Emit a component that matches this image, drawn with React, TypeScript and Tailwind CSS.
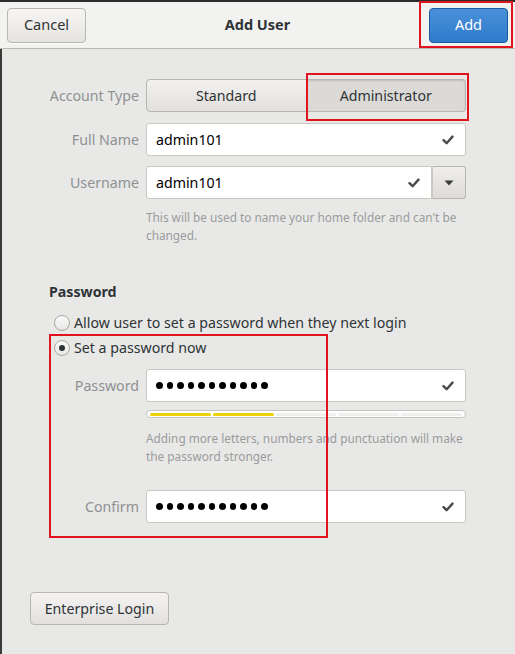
import React from "react";

const font = "font-['Noto_Sans','Open_Sans',sans-serif]";

const Check = () => (
  <svg width="12" height="10" viewBox="0 0 12 10" className="shrink-0">
    <path d="M1.5 5.2 L4.6 8.2 L10.5 1.6" fill="none" stroke="#4a4a4a" strokeWidth="2.4" strokeLinecap="round" strokeLinejoin="round" />
  </svg>
);

const Dots = () => (
  <div className="flex gap-[4px] items-center">
    {Array.from({ length: 11 }).map((_, i) => (
      <span key={i} className="block w-[6.5px] h-[6.5px] rounded-full bg-black" />
    ))}
  </div>
);

const Label = ({ children }: { children: React.ReactNode }) => (
  <span className="w-[90px] text-right mr-[7px] text-[14.2px] text-[#8e9192] shrink-0 whitespace-nowrap">{children}</span>
);

const Field = ({ children }: { children: React.ReactNode }) => (
  <div className="flex items-center justify-between h-[33px] w-[320px] bg-white border border-[#cdc7c2] rounded-[3px] pl-[9px] pr-[11px]">
    {children}
  </div>
);

export default function App() {
  return (
    <div className={`${font} relative w-[515px] h-[654px] bg-[#e8e8e7] overflow-hidden flex flex-col text-[#2e3436]`}>
      <div className="h-[2px] bg-[#2b2b2b] shrink-0" />
      <header className="h-[47px] shrink-0 flex items-center justify-between pl-[7px] pr-[7px] bg-[#f2f2f1] border-b border-[#b9b9b6]">
        <button className="h-[35px] w-[79px] rounded-[4px] border border-[#b8b6b1] bg-gradient-to-b from-[#f6f5f4] to-[#e6e4e1] text-[14.5px] text-[#2e3436] shadow-[0_1px_0_rgba(255,255,255,0.8)]">
          Cancel
        </button>
        <span className="text-[14.5px] font-bold text-[#2e3436]">Add User</span>
        <button className="h-[35px] w-[79px] rounded-[4px] border border-[#1b5c9e] bg-gradient-to-b from-[#4a90d9] to-[#2f7bcb] text-[14.5px] text-white">
          Add
        </button>
      </header>

      <div className="flex-1 border-l-2 border-[#3a3a3a] pl-[47px] pt-[30px] flex flex-col">
        <div className="flex items-center">
          <Label>Account Type</Label>
          <div className="flex h-[33px] w-[320px]">
            <button className="flex-1 rounded-l-[4px] border border-[#b8b6b1] bg-gradient-to-b from-[#f2f1f0] to-[#e2e0dd] text-[14.2px] text-[#2e3436]">
              Standard
            </button>
            <button className="flex-1 rounded-r-[4px] border border-l-0 border-[#b8b6b1] bg-[#dcdad6] text-[14.2px] text-[#2e3436] shadow-[inset_0_1px_2px_rgba(0,0,0,0.12)]">
              Administrator
            </button>
          </div>
        </div>

        <div className="flex items-center mt-[11px]">
          <Label>Full Name</Label>
          <Field>
            <span className="text-[14.2px] text-black">admin101</span>
            <Check />
          </Field>
        </div>

        <div className="flex items-center mt-[10px]">
          <Label>Username</Label>
          <div className="flex h-[33px] w-[320px]">
            <div className="flex-1 flex items-center justify-between bg-white border border-[#cdc7c2] rounded-l-[3px] pl-[9px] pr-[11px]">
              <span className="text-[14.2px] text-black">admin101</span>
              <Check />
            </div>
            <div className="w-[34px] flex items-center justify-center border border-l-[#cdc7c2] border-[#b8b6b1] rounded-r-[3px] bg-gradient-to-b from-[#efeeec] to-[#dddbd8]">
              <svg width="10" height="6" viewBox="0 0 10 6">
                <path d="M0.5 0.5 L9.5 0.5 L5 5.5 Z" fill="#3d3d3d" />
              </svg>
            </div>
          </div>
        </div>

        <p className="ml-[97px] mt-[9px] w-[320px] text-[11.8px] leading-[18px] text-[#9a9c9c]">
          This will be used to name your home folder and can't be changed.
        </p>

        <h2 className="mt-[38px] text-[14.2px] font-bold text-[#2e3436] leading-[20px]">Password</h2>

        <label className="flex items-center mt-[11px] ml-[5px] h-[20px]">
          <span className="shrink-0 w-[16px] h-[16px] rounded-full border border-[#a9a7a3] bg-gradient-to-b from-[#fafafa] to-[#e8e7e5] mr-[4px]" />
          <span className="text-[14.2px] whitespace-nowrap">Allow user to set a password when they next login</span>
        </label>
        <label className="flex items-center mt-[5px] ml-[5px] h-[20px]">
          <span className="shrink-0 w-[16px] h-[16px] rounded-full border border-[#a9a7a3] bg-gradient-to-b from-[#fafafa] to-[#e8e7e5] mr-[4px] flex items-center justify-center">
            <span className="w-[6px] h-[6px] rounded-full bg-[#2e3436]" />
          </span>
          <span className="text-[14.2px]">Set a password now</span>
        </label>

        <div className="flex items-center mt-[11px]">
          <Label>Password</Label>
          <Field>
            <Dots />
            <Check />
          </Field>
        </div>

        <div className="ml-[97px] mt-[8px] w-[320px] h-[8px] rounded-full border border-[#c6c4c0] bg-white flex gap-[2px] px-[3px] items-center">
          <span className="flex-1 h-[3px] rounded-full bg-[#edd400]" />
          <span className="flex-1 h-[3px] rounded-full bg-[#edd400]" />
          <span className="flex-1 h-[3px] rounded-full bg-[#efefee]" />
          <span className="flex-1 h-[3px] rounded-full bg-[#efefee]" />
          <span className="flex-1 h-[3px] rounded-full bg-[#efefee]" />
        </div>

        <p className="ml-[97px] mt-[11px] w-[320px] text-[11.8px] leading-[18px] text-[#9a9c9c]">
          Adding more letters, numbers and punctuation will make the password stronger.
        </p>

        <div className="flex items-center mt-[25px]">
          <Label>Confirm</Label>
          <Field>
            <Dots />
            <Check />
          </Field>
        </div>

        <button className="mt-[69px] -ml-[19px] h-[33px] w-[139px] rounded-[4px] border border-[#b8b6b1] bg-gradient-to-b from-[#f4f3f2] to-[#e2e0dd] text-[14.2px] text-[#2e3436]">
          Enterprise Login
        </button>
      </div>

      {/* annotation boxes */}
      <div className="absolute left-[419px] top-[1px] w-[94px] h-[47px] border-2 border-[#e0141e] pointer-events-none" />
      <div className="absolute left-[306px] top-[73px] w-[163px] h-[48px] border-2 border-[#e0141e] pointer-events-none" />
      <div className="absolute left-[49px] top-[334px] w-[279px] h-[204px] border-2 border-[#e0141e] pointer-events-none" />
    </div>
  );
}
